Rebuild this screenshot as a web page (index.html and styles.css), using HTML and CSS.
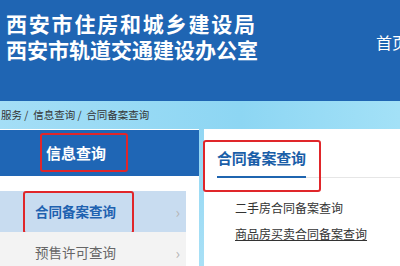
FILE: index.html
```html
<!DOCTYPE html>
<html lang="zh-CN">
<head>
<meta charset="utf-8">
<link rel="stylesheet" href="styles.css">
</head>
<body>
<div class="page">
  <header class="header">
    <div class="brand">
      <div class="brand-line brand-line-1">西安市住房和城乡建设局</div>
      <div class="brand-line">西安市轨道交通建设办公室</div>
    </div>
    <nav class="nav"><span class="nav-item">首页</span></nav>
  </header>
  <div class="main">
    <div class="crumbs">服务 /&nbsp; 信息查询 /&nbsp; 合同备案查询</div>
    <div class="content">
      <aside class="side">
        <div class="side-head"><span>信息查询</span><i class="mark mark-head"></i></div>
        <ul class="side-list">
          <li class="side-item active">合同备案查询<span class="chev">›</span><i class="mark mark-item"></i></li>
          <li class="side-item">预售许可查询<span class="chev">›</span></li>
        </ul>
      </aside>
      <section class="panel">
        <div class="tabbar"><span class="tab">合同备案查询</span></div>
        <i class="mark mark-tab"></i>
        <ul class="links">
          <li>二手房合同备案查询</li>
          <li class="u">商品房买卖合同备案查询</li>
        </ul>
      </section>
    </div>
  </div>
</div>
</body>
</html>
```
FILE: styles.css
```css
* { box-sizing: border-box; margin: 0; padding: 0; }
html, body { width: 400px; height: 266px; overflow: hidden; }
body {
  font-family: "Noto Sans CJK SC", "Noto Sans", sans-serif;
  background: #9dd9f2;
}
.page { width: 400px; height: 266px; overflow: hidden; }
.header {
  height: 101px;
  background: #1f65b3;
  display: flex;
  color: #fff;
  white-space: nowrap;
  overflow: hidden;
}
.brand { flex: 0 0 376px; padding: 10px 0 0 6px; }
.brand-line { font-size: 21px; line-height: 26px; height: 26px; font-weight: 700; }
.brand-line-1 { letter-spacing: 1.8px; }
.nav { display: flex; padding-top: 32px; font-size: 16px; line-height: 20px; }
.main {
  background: linear-gradient(180deg, #8ed5f3 0%, #a8e0f6 100%);
  height: 165px;
}
.crumbs {
  height: 28px;
  line-height: 28px;
  padding-left: 1px;
  font-size: 10.5px;
  color: #333;
  background: linear-gradient(90deg, #a4def6 0%, #8dd6f3 60%, #a3e1f7 100%);
}
.content { display: flex; gap: 5px; height: 137px; }
.side { flex: 0 0 199px; background: #fff; }
.side-head {
  position: relative;
  height: 46px;
  background: #1f66b5;
  color: #fff;
  font-size: 15px;
  font-weight: 700;
  line-height: 46px;
  padding-left: 46px;
  margin-top: 1px;
}
.side-list { list-style: none; padding-top: 15px; width: 186px; }
.side-item {
  position: relative;
  height: 41px;
  line-height: 41px;
  padding-left: 35px;
  font-size: 13.5px;
  color: #666;
  background: #f3f3f3;
}
.side-item.active { background: #c8dcf0; color: #1f62b0; font-weight: 700; }
.chev {
  position: absolute;
  right: 6px;
  top: 0;
  color: #b5b5b5;
  font-weight: 400;
  font-size: 15px;
}
.panel { flex: 1; background: #fff; position: relative; }
.tabbar { margin-left: 13px; border-bottom: 1px solid #e6e6e6; height: 49px; }
.tab {
  display: inline-block;
  padding-top: 20px;
  height: 49px;
  font-size: 15px;
  line-height: 18px;
  font-weight: 700;
  color: #1a5ea8;
  border-bottom: 2px solid #1f65b0;
  letter-spacing: -0.2px;
}
.links { list-style: none; padding: 17px 0 0 31px; font-size: 12px; line-height: 26px; color: #333; }
.links .u { text-decoration: underline; }
.mark { position: absolute; border: 2px solid #e0262a; border-radius: 3px; }
.mark-head { left: 40px; top: 3px; width: 88px; height: 39px; }
.mark-item { left: 23px; top: 0; width: 111px; height: 43px; }
.mark-tab { left: -1px; top: 11px; width: 118px; height: 52px; }
```
